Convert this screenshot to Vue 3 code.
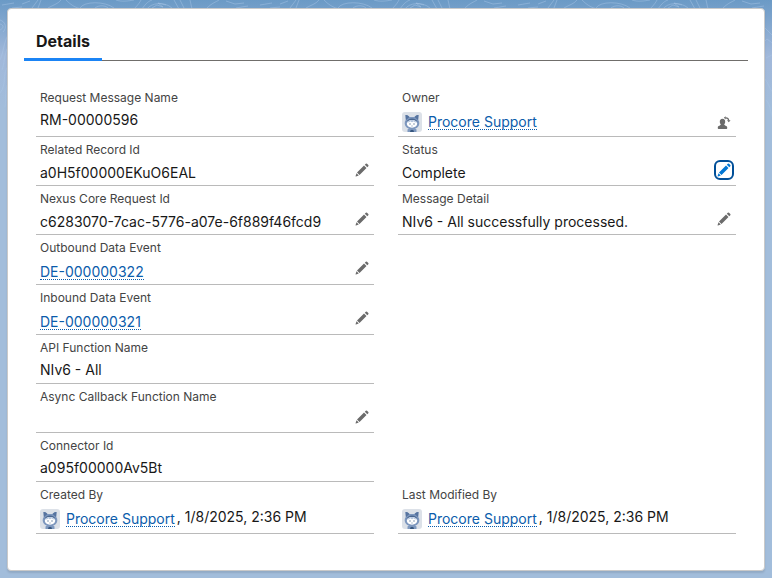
<script setup>
const person = 'Procore Support'
const when = '1/8/2025, 2:36 PM'

const rows = [
  [
    { label: 'Request Message Name', text: 'RM-00000596', kind: 'plain' },
    { label: 'Owner', person, kind: 'person', action: 'owner' }
  ],
  [
    { label: 'Related Record Id', text: 'a0H5f00000EKuO6EAL', kind: 'editable', action: 'edit' },
    { label: 'Status', text: 'Complete', kind: 'editable', action: 'edit', active: true }
  ],
  [
    { label: 'Nexus Core Request Id', text: 'c6283070-7cac-5776-a07e-6f889f46fcd9', kind: 'editable', action: 'edit' },
    { label: 'Message Detail', text: 'NIv6 - All successfully processed.', kind: 'editable', action: 'edit' }
  ],
  [{ label: 'Outbound Data Event', link: 'DE-000000322', kind: 'lookup', action: 'edit' }],
  [{ label: 'Inbound Data Event', link: 'DE-000000321', kind: 'lookup', action: 'edit' }],
  [{ label: 'API Function Name', text: 'NIv6 - All', kind: 'plain' }],
  [{ label: 'Async Callback Function Name', text: '', kind: 'plain', action: 'edit' }],
  [{ label: 'Connector Id', text: 'a095f00000Av5Bt', kind: 'plain' }],
  [
    { label: 'Created By', person, when, kind: 'person' },
    { label: 'Last Modified By', person, when, kind: 'person' }
  ]
]
</script>

<template>
  <div class="page">
    <svg class="contours" aria-hidden="true" width="100%" height="140">
      <defs>
        <pattern id="topo" width="258" height="140" patternUnits="userSpaceOnUse">
          <g fill="none" stroke="#a9c6e6" stroke-opacity=".45" stroke-width="1">
            <path d="M2 5 14 3M12 8 22 7M22 4 30 1M32 8 38 0M38 8 41 0M48 8C53 5 58 4 61 0M66 0C70 4 75 8 82 9M80 8C84 1 105 1 114 8M95 8C99 5 105 5 108 8M116 0C122 2 128 1 134 0M134 9C138 5 140 2 141 0M142 9C146 3 149 1 152 0M147 9C151 3 164 1 172 8M152 8 157 5 163 7 158 3 166 5M174 0 179 9M180 0 184 8M190 0 192 9M207 8C212 3 216 2 219 0M226 1 235 4 244 3M236 8 248 6" />
            <path d="M0 20C6 22 7 28 3 32M0 24C4 25 4 28 0 30M8 35C3 45 4 51 0 60M8 47C4 55 5 61 2 70M8 66C2 75 7 84 0 93M8 83C4 92 7 96 5 107M249 28 258 37M249 41C253 35 255 48 258 40M250 58 258 54M249 79C253 84 254 91 258 93M250 100C255 105 254 114 258 120" />
          </g>
        </pattern>
      </defs>
      <rect width="100%" height="140" fill="url(#topo)" />
    </svg>
    <main class="card">
      <nav class="tabs"><a class="tab" href="#details">Details</a></nav>
      <section id="details" class="record">
        <div v-for="(row, r) in rows" :key="r" class="row">
          <div v-for="field in row" :key="field.label" class="field" :class="field.kind">
            <div class="label">{{ field.label }}</div>
            <div class="value">
              <template v-if="field.person">
                <svg class="avatar" viewBox="0 0 20 20" aria-hidden="true">
                  <rect width="20" height="20" rx="3" fill="#dce1e8" />
                  <path d="M5.500 20V17.500Q7 15.500 10 15.500T14.500 17.500V20Z" fill="#7f99bf" />
                  <path d="M3.500 3Q5.500 2.500 7.500 5H12.500Q14.500 2.500 16.500 3L16.300 8Q17.500 9.500 17.300 12 16.500 17 10 17 3.500 17 2.700 12 2.500 9.500 3.700 8Z" fill="#7d97be" />
                  <path d="M3.500 3Q5.500 2.500 7.500 5L4 8ZM16.500 3Q14.500 2.500 12.500 5L16 8Z" fill="#56739f" />
                  <path d="M4 10.500Q6 6.500 10 6.500T16 10.500L15 9.500Q12.500 8 10 8T5 9.500Z" fill="#49668f" />
                  <ellipse cx="10" cy="11.800" rx="5.200" ry="3.900" fill="#fff" />
                  <path d="M5 10.500Q6.500 8 10 8T15 10.500Q12.500 10.500 11.500 9.300 10 11 8.500 9.300 7 10.800 5 10.500Z" fill="#b3c4dd" />
                  <circle cx="8" cy="12" r=".7" fill="#5c7799" />
                  <circle cx="12" cy="12" r=".7" fill="#5c7799" />
                  <path d="M9 13.800Q10 14.600 11 13.800" fill="none" stroke="#8da1bb" stroke-width=".6" />
                  <path d="M8 20Q8 17.800 10 17.800T12 20Z" fill="#36567e" />
                </svg>
                <a class="link" href="#user">{{ field.person }}</a>
                <span v-if="field.when" class="when">, {{ field.when }}</span>
              </template>
              <a v-else-if="field.link" class="link" href="#event">{{ field.link }}</a>
              <template v-else>{{ field.text }}</template>
            </div>
            <button
              v-if="field.action"
              class="action"
              :class="{ active: field.active, change: field.action === 'owner' }"
              type="button"
              :aria-label="(field.action === 'owner' ? 'Change ' : 'Edit ') + field.label"
            >
              <svg v-if="field.action === 'edit'" viewBox="0 0 14 14" aria-hidden="true">
                <path d="M2 9.500 9 2.500 11.500 5 4.500 12ZM9.800 1.700 10.800.7Q11.400.2 12 .7L13.300 2Q13.800 2.600 13.300 3.200L12.300 4.200ZM1.500 10.200 3.800 12.500 1 13.400Q.4 13.600 .6 13Z" />
              </svg>
              <svg v-else viewBox="0 0 14 14" aria-hidden="true">
                <path d="M5.500 2.800C7.500 2.800 8.200 4.200 8.200 5.800 8.200 7.200 7.500 7.900 7.200 8.400 7.100 9.400 10.200 9.500 10.200 11.300V12.300Q10.200 13 9.500 13H1.500Q.8 13 .8 12.300V11.300C.8 9.500 3.900 9.400 3.800 8.400 3.500 7.900 2.800 7.200 2.800 5.800 2.800 4.200 3.500 2.800 5.500 2.800Z" />
                <path d="M8.500 1.800Q11.300 1.600 11.800 4.500" fill="none" stroke="currentColor" stroke-width="1.200" />
                <path d="M8.700.2V3.400L6.800 1.800ZM10 4.300H13.600L11.800 6.300Z" />
              </svg>
            </button>
          </div>
        </div>
      </section>
    </main>
  </div>
</template>

<style>
body {
  margin: 0;
}
</style>

<style scoped>
.page {
  position: relative;
  box-sizing: border-box;
  min-height: 100vh;
  padding: 8px 7px 7px;
  background: linear-gradient(#6b9ac6 0, #a1b8da 56px, #a2bddb 110px);
  font-family: Inter, "Liberation Sans", sans-serif;
  color: #181818;
}
.contours {
  position: absolute;
  top: 0;
  left: 0;
}
.card {
  position: relative;
  padding: 16px 16px 36px;
  background: #fff;
  border: 1px solid #c9c9c9;
  border-radius: 4px;
  box-shadow: 0 2px 2px rgba(0, 0, 0, 0.1);
}
.tabs {
  display: flex;
  border-bottom: 1px solid #706e6b;
}
.tab {
  padding: 6px 12px 7px;
  margin-bottom: -1px;
  border-bottom: 3px solid #1b84f5;
  color: #181818;
  font-size: 16px;
  font-weight: 700;
  line-height: 20px;
  text-decoration: none;
}
.record {
  padding: 24px 12px 0;
}
.row {
  display: grid;
  grid-template-columns: 1fr 1fr;
  column-gap: 24px;
}
.field {
  position: relative;
  box-sizing: border-box;
  padding: 4px 4px 2px;
  border-bottom: 1px solid #bababa;
}
.label {
  color: #444;
  font-size: 12px;
  line-height: 18px;
}
.value {
  min-height: 20px;
  font-size: 14px;
  line-height: 20px;
}
.plain .value {
  padding: 3px 0 1px;
}
.editable .value {
  padding-top: 4px;
}
.lookup .value {
  display: flex;
  align-items: center;
  padding-top: 5px;
}
.person .value {
  display: flex;
  align-items: center;
  padding: 5px 0 2px;
}
.link {
  color: #0b5cab;
  line-height: 14px;
  text-decoration: none;
  border-bottom: 1px dotted #0b5cab;
}
.avatar {
  width: 20px;
  height: 20px;
  margin-right: 6px;
}
.when {
  align-self: flex-start;
  margin-left: 2px;
  line-height: 16px;
}
.action {
  position: absolute;
  top: 23px;
  right: 2px;
  display: grid;
  place-items: center;
  box-sizing: border-box;
  width: 20px;
  height: 20px;
  padding: 0;
  background: none;
  border: 0;
  border-radius: 6px;
  color: #6b6b6b;
}
.action.change {
  top: 28px;
}
.action svg {
  width: 14px;
  height: 14px;
  fill: currentColor;
}
.action.active {
  border: 2px solid #014f98;
  color: #0176d3;
}
</style>
